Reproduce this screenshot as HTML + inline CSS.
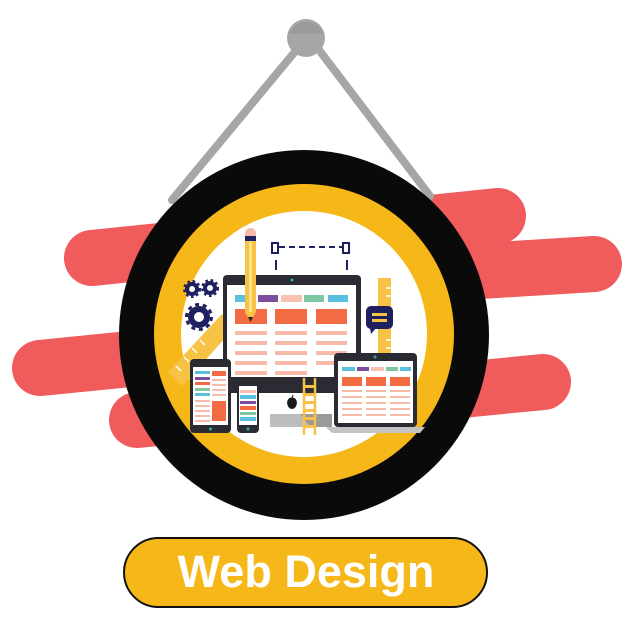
<!DOCTYPE html>
<html><head><meta charset="utf-8"><style>
html,body{margin:0;padding:0;background:#fff;width:626px;height:626px;overflow:hidden}
svg{display:block}
</style></head><body>
<svg width="626" height="626" viewBox="0 0 626 626" xmlns="http://www.w3.org/2000/svg">
<!-- red bars -->
<g stroke="#f05b5b" stroke-width="56" stroke-linecap="round" fill="none">
<line x1="92" y1="258" x2="498" y2="216"/>
<line x1="400" y1="276" x2="594" y2="264"/>
<line x1="40" y1="368" x2="300" y2="342"/>
<line x1="137" y1="420" x2="300" y2="404"/>
<line x1="400" y1="396" x2="543" y2="382"/>
</g>
<!-- strings -->
<g stroke="#a6a6a6" stroke-width="8" stroke-linecap="round">
<line x1="298" y1="48" x2="172" y2="200"/>
<line x1="316" y1="46" x2="430" y2="196"/>
</g>
<circle cx="306" cy="38" r="19" fill="#a6a6a6"/>
<path d="M289 34 A18 18 0 0 1 323 34" fill="#9a9a9a"/>
<!-- rings -->
<circle cx="304" cy="335" r="185" fill="#0a0a0a"/>
<circle cx="304" cy="334" r="150" fill="#f6b818"/>
<circle cx="304" cy="334" r="123" fill="#fff"/>
<!-- diagonal ruler -->
<polygon points="168,372 222,314 236,326 182,386" fill="#f6c344"/>
<g stroke="#fff" stroke-width="1.5"><line x1="176" y1="366" x2="181" y2="371"/><line x1="184" y1="357" x2="189" y2="362"/><line x1="192" y1="348" x2="197" y2="353"/><line x1="200" y1="340" x2="205" y2="345"/></g>
<!-- gears -->
<g fill="none" stroke="#1f2060">
<circle cx="192" cy="289" r="5" stroke-width="4"/>
<circle cx="210" cy="288" r="5" stroke-width="4"/>
<circle cx="199" cy="317" r="8" stroke-width="6"/>
</g>
<g stroke="#1f2060" stroke-width="3" stroke-dasharray="2.5 2.6"><circle cx="192" cy="289" r="7.5" fill="none"/><circle cx="210" cy="288" r="7.5" fill="none"/></g>
<circle cx="199" cy="317" r="12.5" fill="none" stroke="#1f2060" stroke-width="3" stroke-dasharray="4 3.8"/>
<!-- vertical ruler -->
<rect x="378" y="278" width="13" height="82" fill="#f6c344"/>
<g stroke="#fff" stroke-width="1.5"><line x1="386" y1="288" x2="391" y2="288"/><line x1="386" y1="296" x2="391" y2="296"/><line x1="386" y1="340" x2="391" y2="340"/><line x1="386" y1="348" x2="391" y2="348"/></g>
<!-- monitor -->
<rect x="223" y="275" width="138" height="118" rx="4" fill="#2b2b33"/>
<rect x="227" y="285" width="129" height="92" fill="#fff"/>
<circle cx="292" cy="280" r="1.5" fill="#3aa"/>
<rect x="266" y="393" width="60" height="22" fill="#fff"/>
<rect x="270" y="414" width="62" height="13" fill="#9a9a9a"/>
<polygon points="270,414 300,414 310,427 270,427" fill="#bdbdbd"/>
<path d="M292 398 c-4 0 -5 4 -4 7 c1 3 3 4 4 3 c1 1 3 0 4 -3 c1 -3 0 -7 -4 -7z M292 398 l1 -3" fill="#1a1a1a" stroke="#1a1a1a" stroke-width="1"/>
<rect x="235" y="295" width="20" height="7" fill="#5bc0de"/>
<rect x="258" y="295" width="20" height="7" fill="#7d4e9e"/>
<rect x="281" y="295" width="21" height="7" fill="#f7c0b0"/>
<rect x="304" y="295" width="20" height="7" fill="#7cc8a0"/>
<rect x="328" y="295" width="20" height="7" fill="#5bc0de"/>
<g fill="#f26b43"><rect x="235" y="309" width="32" height="15"/><rect x="275" y="309" width="32" height="15"/><rect x="316" y="309" width="31" height="15"/></g>
<g fill="#f7b9a8">
<rect x="235" y="331" width="32" height="4"/><rect x="275" y="331" width="32" height="4"/><rect x="316" y="331" width="31" height="4"/>
<rect x="235" y="341" width="32" height="4"/><rect x="275" y="341" width="32" height="4"/><rect x="316" y="341" width="31" height="4"/>
<rect x="235" y="351" width="32" height="4"/><rect x="275" y="351" width="32" height="4"/><rect x="316" y="351" width="31" height="4"/>
<rect x="235" y="361" width="32" height="4"/><rect x="275" y="361" width="32" height="4"/><rect x="316" y="361" width="31" height="4"/>
<rect x="235" y="371" width="32" height="4"/><rect x="275" y="371" width="32" height="4"/>
</g>
<!-- pencil -->
<rect x="245" y="236" width="11" height="76" fill="#f6c344"/>
<rect x="249" y="236" width="3" height="76" fill="#fde08a"/>
<path d="M245 236 v-3 a5.5 5 0 0 1 11 0 v3z" fill="#f7b9a8"/>
<rect x="245" y="236" width="11" height="5" fill="#1f2060"/>
<polygon points="245,312 256,312 250.5,322" fill="#f6c344"/>
<polygon points="248,317 253,317 250.5,322" fill="#222"/>
<!-- selection -->
<g fill="none" stroke="#1f2060" stroke-width="2">
<rect x="272" y="243" width="6" height="10"/><rect x="343" y="243" width="6" height="10"/>
<line x1="279" y1="247" x2="342" y2="247" stroke-dasharray="6 4"/>
<line x1="276" y1="260" x2="276" y2="270"/><line x1="347" y1="260" x2="347" y2="270"/>
</g>
<!-- chat bubble -->
<rect x="366" y="306" width="27" height="23" rx="5" fill="#1f2060"/>
<polygon points="370,328 376,328 371,334" fill="#1f2060"/>
<rect x="372" y="313" width="15" height="3" fill="#f6c344"/><rect x="372" y="319" width="15" height="3" fill="#f6c344"/>
<!-- tablet -->
<rect x="190" y="359" width="41" height="74" rx="4" fill="#2b2b33"/>
<rect x="193" y="367" width="35" height="58" fill="#fff"/>
<circle cx="210.5" cy="429" r="1.5" fill="#3aa"/>
<rect x="195" y="371" width="15" height="3" fill="#5bc0de"/><rect x="195" y="377" width="15" height="3" fill="#7d4e9e"/>
<rect x="195" y="382" width="15" height="3" fill="#f26b43"/><rect x="195" y="388" width="15" height="3" fill="#7cc8a0"/>
<rect x="195" y="393" width="15" height="3" fill="#5bc0de"/>
<rect x="212" y="371" width="14" height="5" fill="#f26b43"/>
<g fill="#f7b9a8"><rect x="212" y="379" width="14" height="2"/><rect x="212" y="384" width="14" height="2"/><rect x="212" y="389" width="14" height="2"/><rect x="212" y="394" width="14" height="2"/>
<rect x="195" y="400" width="15" height="2"/><rect x="195" y="405" width="15" height="2"/><rect x="195" y="410" width="15" height="2"/><rect x="195" y="415" width="15" height="2"/><rect x="195" y="420" width="15" height="2"/></g>
<rect x="212" y="401" width="14" height="20" fill="#f26b43"/>
<!-- phone -->
<rect x="237" y="380" width="22" height="53" rx="4" fill="#2b2b33"/>
<rect x="239" y="386" width="18" height="39" fill="#fff"/>
<circle cx="248" cy="429" r="1.5" fill="#3aa"/>
<rect x="240" y="390" width="16" height="3" fill="#f7c0b0"/>
<rect x="240" y="395" width="16" height="4" fill="#5bc0de"/><rect x="240" y="401" width="16" height="3" fill="#7d4e9e"/>
<rect x="240" y="406" width="16" height="4" fill="#f26b43"/><rect x="240" y="412" width="16" height="3" fill="#7cc8a0"/>
<rect x="240" y="417" width="16" height="4" fill="#5bc0de"/>
<!-- ladder -->
<g stroke="#f6c344" stroke-width="2.5"><line x1="304" y1="378" x2="304" y2="435"/><line x1="315" y1="378" x2="315" y2="435"/></g>
<g fill="#f6c344"><rect x="304" y="385" width="11" height="3"/><rect x="304" y="393" width="11" height="3"/><rect x="304" y="401" width="11" height="3"/><rect x="304" y="409" width="11" height="3"/><rect x="304" y="417" width="11" height="3"/><rect x="304" y="425" width="11" height="3"/></g>
<!-- laptop -->
<rect x="334" y="353" width="83" height="74" rx="4" fill="#2b2b33"/>
<rect x="338" y="361" width="75" height="62" fill="#fff"/>
<circle cx="375" cy="357" r="1.5" fill="#3aa"/>
<polygon points="326,427 425,427 420,433 332,433" fill="#c4c4c4"/>
<rect x="342" y="367" width="13" height="4" fill="#5bc0de"/><rect x="357" y="367" width="12" height="4" fill="#7d4e9e"/>
<rect x="371" y="367" width="13" height="4" fill="#f7c0b0"/><rect x="386" y="367" width="12" height="4" fill="#7cc8a0"/><rect x="400" y="367" width="11" height="4" fill="#5bc0de"/>
<g fill="#f26b43"><rect x="342" y="377" width="20" height="9"/><rect x="366" y="377" width="20" height="9"/><rect x="390" y="377" width="20" height="9"/></g>
<g fill="#f7b9a8">
<rect x="342" y="390" width="20" height="2"/><rect x="366" y="390" width="20" height="2"/><rect x="390" y="390" width="20" height="2"/>
<rect x="342" y="396" width="20" height="2"/><rect x="366" y="396" width="20" height="2"/><rect x="390" y="396" width="20" height="2"/>
<rect x="342" y="402" width="20" height="2"/><rect x="366" y="402" width="20" height="2"/><rect x="390" y="402" width="20" height="2"/>
<rect x="342" y="408" width="20" height="2"/><rect x="366" y="408" width="20" height="2"/><rect x="390" y="408" width="20" height="2"/>
<rect x="342" y="414" width="20" height="2"/><rect x="366" y="414" width="20" height="2"/><rect x="390" y="414" width="20" height="2"/>
</g>
<!-- button -->
<rect x="124" y="538" width="363" height="69" rx="34.5" fill="#f6b818" stroke="#111" stroke-width="2"/>
<text x="306" y="587" text-anchor="middle" font-family="Liberation Sans, sans-serif" font-weight="bold" font-size="45" fill="#fff">Web Design</text>
</svg>
</body></html>
